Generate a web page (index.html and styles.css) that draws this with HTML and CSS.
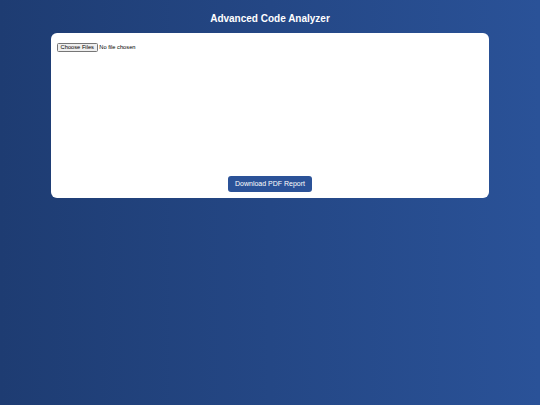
FILE: index.html
```html
<!DOCTYPE html>
<html lang="en">
<head>
<meta charset="utf-8">
<title>Advanced Code Analyzer</title>
<link rel="stylesheet" href="styles.css">
</head>
<body>
  <h1 class="title">Advanced Code Analyzer</h1>
  <main class="card">
    <div class="upload">
      <input type="file" class="file-input" multiple>
    </div>
    <div class="results"></div>
    <div class="actions">
      <button class="download-btn" type="button">Download PDF Report</button>
    </div>
  </main>
</body>
</html>
```
FILE: styles.css
```css
html, body {
  margin: 0;
  height: 100%;
}
body {
  font-family: "Liberation Sans", Arial, sans-serif;
  background: linear-gradient(90deg, #1e3c72 0%, #2a5298 100%);
  padding-top: 11px;
  box-sizing: border-box;
}
.title {
  margin: 0 0 6px;
  font-size: 10px;
  line-height: 16px;
  font-weight: bold;
  color: #ffffff;
  text-align: center;
}
.card {
  width: 438px;
  height: 165px;
  margin: 0 auto;
  background: #ffffff;
  border-radius: 6px;
  padding: 10px 6px 6px;
  box-sizing: border-box;
  display: flex;
  flex-direction: column;
}
.upload {
  line-height: 0;
}
.file-input {
  zoom: 0.43;
  margin: 0;
}
.results {
  flex: 1;
}
.actions {
  text-align: center;
  line-height: 0;
}
.download-btn {
  font-family: "Liberation Sans", Arial, sans-serif;
  font-size: 7px;
  line-height: 16px;
  height: 16px;
  padding: 0 7px;
  border: none;
  border-radius: 3px;
  background: #2b5298;
  color: #ffffff;
  cursor: pointer;
}
```
